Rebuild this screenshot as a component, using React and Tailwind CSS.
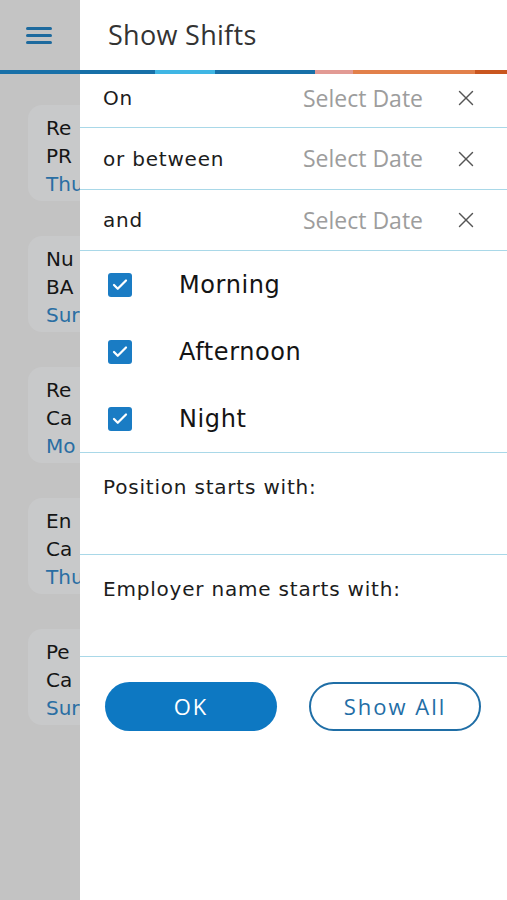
import React from 'react';
import { X, Check } from 'lucide-react';

const cards = [
  { a: 'Re', b: 'PR', c: 'Thu' },
  { a: 'Nu', b: 'BA', c: 'Sur' },
  { a: 'Re', b: 'Ca', c: 'Mo' },
  { a: 'En', b: 'Ca', c: 'Thu' },
  { a: 'Pe', b: 'Ca', c: 'Sur' },
];

const dateRows = [
  { label: 'On', h: 'h-[54px] pb-[5px]' },
  { label: 'or between', h: 'h-[62px]' },
  { label: 'and', h: 'h-[61px]' },
];
const shifts = ['Morning', 'Afternoon', 'Night'];

const geo = { fontFamily: '"DejaVu Sans", "Open Sans", sans-serif' };
const sans = { fontFamily: '"Open Sans", Roboto, sans-serif' };

const App = () => {
  return (
    <div className="w-[507px] h-[900px] overflow-hidden bg-white flex flex-col">
      {/* Header */}
      <div className="flex h-[70px]">
        <div className="w-[80px] bg-[#c4c4c4] flex items-center justify-center">
          <div className="flex flex-col gap-[4px] w-[26px] -ml-[2px]">
            <div className="h-[3px] bg-[#1d6a9e] rounded" />
            <div className="h-[3px] bg-[#1d6a9e] rounded" />
            <div className="h-[3px] bg-[#1d6a9e] rounded" />
          </div>
        </div>
        <div className="flex-1 flex items-center pl-[28px]">
          <span className="text-[27px] tracking-[0.3px] text-[#333]" style={sans}>Show Shifts</span>
        </div>
      </div>

      {/* Colour bar */}
      <div className="flex h-[4px]">
        <div className="w-[155px] bg-[#1870a8]" />
        <div className="w-[60px] bg-[#3fb6e4]" />
        <div className="w-[100px] bg-[#1870a8]" />
        <div className="w-[38px] bg-[#e29a94]" />
        <div className="w-[122px] bg-[#e2804a]" />
        <div className="flex-1 bg-[#c9561f]" />
      </div>

      {/* Body */}
      <div className="flex flex-1">
        {/* dimmed list behind the drawer */}
        <div className="w-[80px] bg-[#c3c3c3] overflow-hidden pt-[31px]">
          <div className="flex flex-col gap-[35px] pl-[28px]">
            {cards.map((c, i) => (
              <div key={i} className="w-[120px] h-[96px] rounded-l-[14px] bg-[#c8c9ca] pl-[18px] pt-[9px] text-[20px] leading-[28px]" style={geo}>
                <div className="text-[#151515] font-medium">{c.a}</div>
                <div className="text-[#151515] font-medium">{c.b}</div>
                <div className="text-[#2a6ea3]">{c.c}</div>
              </div>
            ))}
          </div>
        </div>

        {/* Drawer */}
        <div className="flex-1 flex flex-col">
          {dateRows.map((r) => (
            <div key={r.label} className={`${r.h} flex items-center border-b border-[#a9d8e8] pl-[23px] pr-[28px]`}>
              <span className="text-[20px] tracking-[0.8px] text-[#1c1c1c]" style={geo}>{r.label}</span>
              <span className="ml-auto text-[23px] text-[#9d9d9d]" style={sans}>Select Date</span>
              <X className="w-[26px] h-[26px] ml-[30px] text-[#555]" strokeWidth={1.3} />
            </div>
          ))}

          <div className="flex flex-col border-b border-[#a9d8e8]">
            {shifts.map((s) => (
              <div key={s} className="h-[67px] flex items-center pl-[28px]">
                <div className="w-[24px] h-[24px] rounded-[3px] bg-[#1a7cc4] flex items-center justify-center">
                  <Check className="w-[18px] h-[18px] text-white" strokeWidth={3} />
                </div>
                <span className="ml-[47px] text-[24px] tracking-[0.6px] text-[#141414] font-medium" style={geo}>{s}</span>
              </div>
            ))}
          </div>

          <div className="h-[102px] border-b border-[#a9d8e8] pl-[23px] pt-[19px]">
            <span className="text-[20px] tracking-[0.8px] text-[#1c1c1c]" style={geo}>Position starts with:</span>
          </div>
          <div className="h-[102px] border-b border-[#a9d8e8] pl-[23px] pt-[19px]">
            <span className="text-[20px] tracking-[0.8px] text-[#1c1c1c]" style={geo}>Employer name starts with:</span>
          </div>

          <div className="flex items-center pl-[25px] pt-[25px] gap-[32px]">
            <button className="w-[172px] h-[49px] rounded-full bg-[#0d78c2] text-white text-[22px] tracking-[2px]" style={sans}>OK</button>
            <button className="w-[172px] h-[49px] rounded-full border-2 border-[#1f6ea6] text-[#1f6ea6] text-[22px] tracking-[2px]" style={sans}>Show All</button>
          </div>
        </div>
      </div>
    </div>
  );
};

export default App;
